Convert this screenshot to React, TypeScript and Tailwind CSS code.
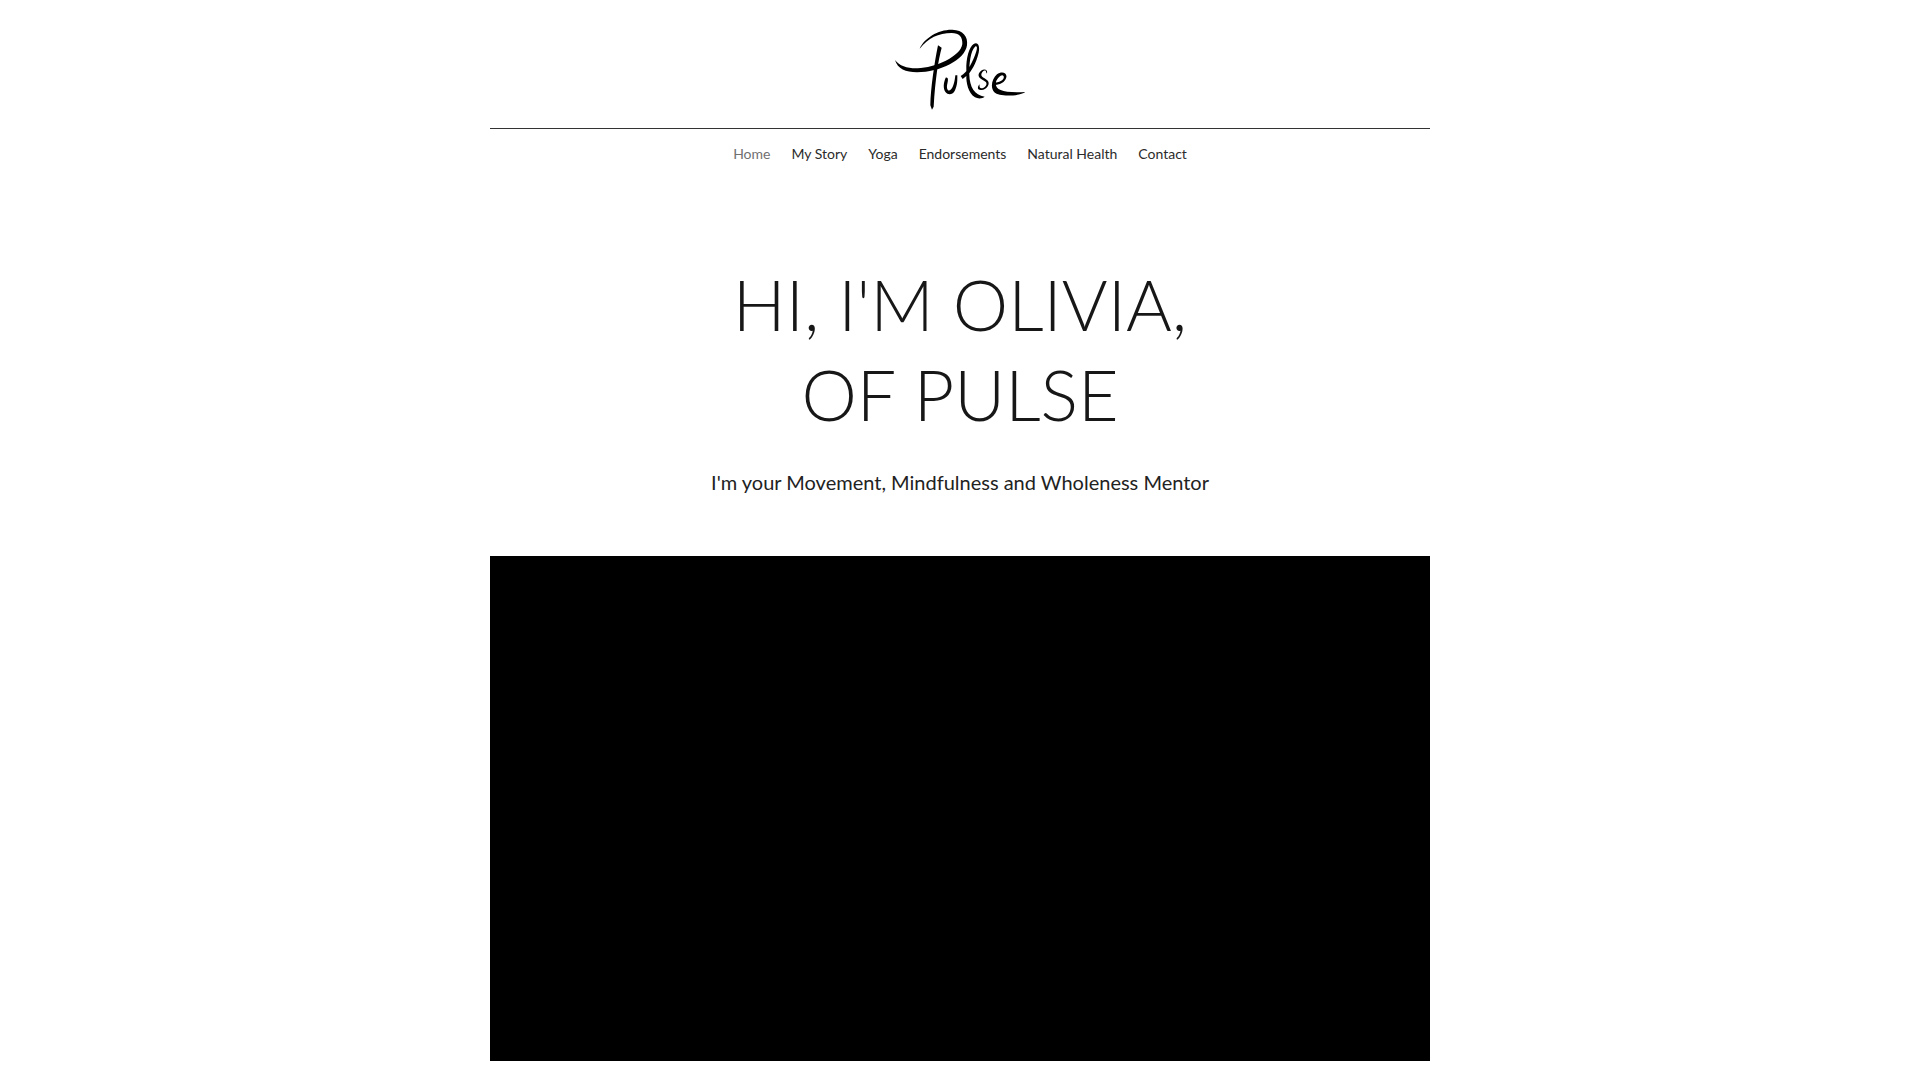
const links = ["Home", "My Story", "Yoga", "Endorsements", "Natural Health", "Contact"];

function PulseLogo() {
  return (
    <svg viewBox="0 0 450 300" className="h-[100px] w-[150px]" role="img" aria-label="Pulse" fill="#000">
      <path d="M104 86C118 54 160 28 202 29C234 30 250 50 246 76C240 120 165 157 96 157C62 156 38 147 30 120C44 138 68 146 98 145C150 143 227 110 232 72C233 50 222 39 200 39C160 39 130 54 104 86Z" />
      <path d="M159 76L170 83C160 120 151 175 146 260L141 269L136 256C137 205 148 130 159 76Z" />
      <path d="M182 173C190 171 190 180 187 191C184 203 187 214 195 211C205 205 209 185 211 166L217 166C217 180 218 195 209 213C202 226 188 225 182 217C173 204 176 187 182 173Z" />
      <path d="M227 168C248 157 264 125 273 97C278 82 276 76 270 80C257 93 252 130 253 165C254 200 268 226 299 230C293 236 279 237 270 232C249 219 243 185 244 168L233 177ZM244 150C243 115 252 82 266 72C278 64 286 77 281 98C274 128 258 158 244 168Z" />
      <path d="M306 161C310 144 289 145 282 160C277 171 287 177 297 182C307 187 306 194 300 200C290 208 281 206 284 193C275 202 278 212 290 210C304 209 316 194 309 183C304 176 290 173 289 165C289 155 303 146 303 156Z" />
      <path d="M324 188C345 188 359 178 356 169C352 160 340 170 334 182C326 208 348 220 421 216C405 228 343 232 328 217C314 200 322 176 336 163C350 152 367 158 364 172C361 187 344 195 325 196Z" />
    </svg>
  );
}

export default function App() {
  return (
    <div className="min-h-screen bg-white font-['Lato','Liberation_Sans',sans-serif] text-[#171717]">
      <div className="mx-auto w-full max-w-[940px]">
        <header>
          <div className="flex justify-center border-b border-[#333] pt-5 pb-2">
            <PulseLogo />
          </div>
          <nav aria-label="Main" className="flex justify-center gap-[21px] pt-[15px] text-sm leading-5">
            {links.map((label) => (
              <a key={label} href="#" className={label === "Home" ? "text-[#717070]" : "text-[#2b2b2b]"}>
                {label}
              </a>
            ))}
          </nav>
        </header>
        <main>
          <section className="pt-[95px] pb-[60px] text-center">
            <h1 className="text-[70px] leading-[90px] font-light">
              HI, I'M OLIVIA,
              <br />
              OF PULSE
            </h1>
            <p className="pt-[29px] text-xl leading-7 text-[#222]">
              I'm your Movement, Mindfulness and Wholeness Mentor
            </p>
          </section>
          <section aria-label="Video" className="aspect-[940/505] w-full bg-black" />
        </main>
      </div>
    </div>
  );
}
